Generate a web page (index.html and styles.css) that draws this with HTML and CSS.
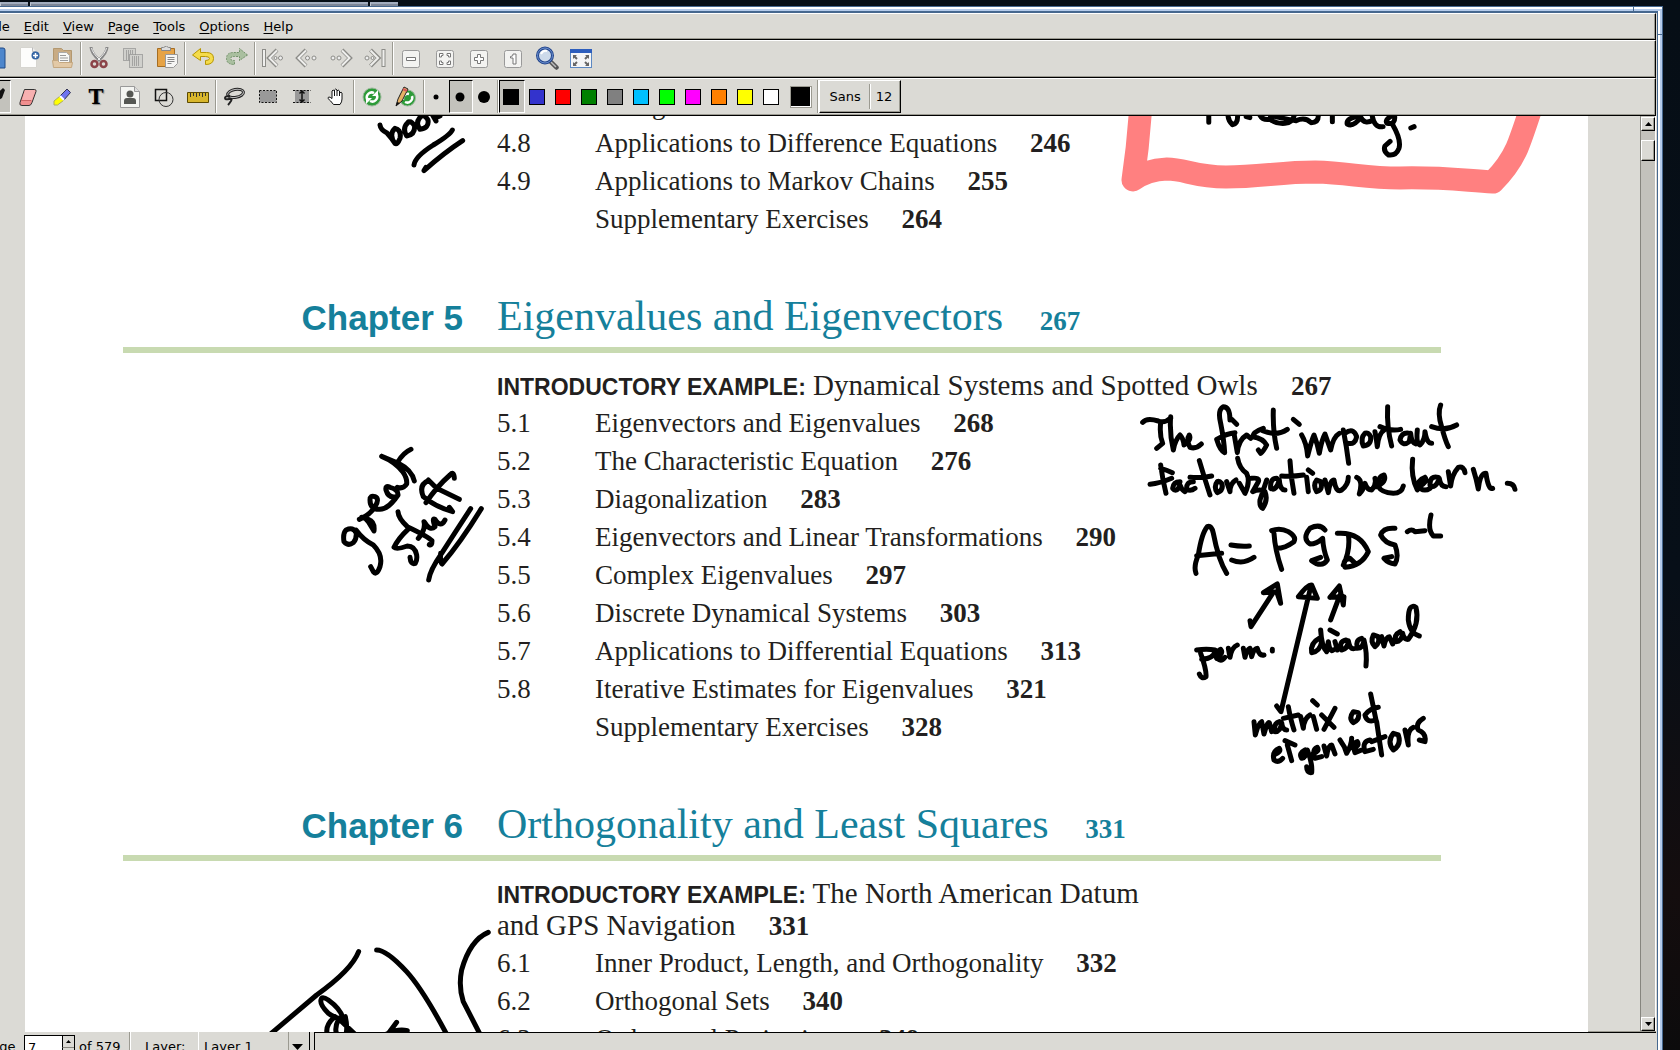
FILE: index.html
```html
<!DOCTYPE html>
<html lang="en">
<head>
    <meta charset="UTF-8">
    <meta name="viewport" content="width=device-width, initial-scale=1.0">
    <title>Xournal</title>
    <link rel="stylesheet" href="styles.css">
</head>
<body>
    <div class="taskbar"><span class="task"></span><span class="task wide"></span><span class="task"></span></div>

    <div class="window">
        <div class="frame">
        <nav class="menubar">
            <button type="button"><u>F</u>ile</button>
            <button type="button"><u>E</u>dit</button>
            <button type="button"><u>V</u>iew</button>
            <button type="button"><u>P</u>age</button>
            <button type="button"><u>T</u>ools</button>
            <button type="button"><u>O</u>ptions</button>
            <button type="button"><u>H</u>elp</button>
        </nav>

        <div class="toolbar main">
            <button type="button" aria-label="Save"><svg viewBox="0 0 24 24"><path d="M1 2h19q2 0 2 2v18H1z" fill="#4d86cc" stroke="#204a87"/><path d="M5 5h12v7H5z" fill="#eee"/></svg></button>
            <button type="button" aria-label="New"><svg viewBox="0 0 24 24"><path d="M3.500 1.500h12l4 4v16h-16z" fill="#fdfdfc" stroke="#d6d5d0"/><path d="M15.500 1.500v4h4" fill="#eee" stroke="#bbb"/><circle cx="18.500" cy="9.500" r="4" fill="#3465a4"/><path d="M18.500 7v5M16 9.500h5" stroke="#fff" stroke-width="1.500"/></svg></button>
            <button type="button" aria-label="Open"><svg viewBox="0 0 24 24"><path d="M2.500 2.500h8l2 2h8v15h-18z" fill="#c8ab84" stroke="#b39870"/><path d="M7.500 6.500h8l3 3v9h-11z" fill="#f8f8f6" stroke="#aaa"/><path d="M9 9.500h6M9 12h8M9 14.500h8" stroke="#999"/><path d="M1.500 14.500h5l2 2h13l-1 5h-18z" fill="#e3c9a6" stroke="#c4a780"/></svg></button>
            <span class="sep"></span>
            <button type="button" aria-label="Cut"><svg viewBox="0 0 24 24"><path d="M4 1q0 6 9 14M20 1q0 6-9 14" fill="none" stroke="#888" stroke-width="3"/><path d="M4.500 2q1 5 8.500 12M19.500 2q-1 5-8.500 12" fill="none" stroke="#eee"/><circle cx="7.500" cy="18" r="3" fill="none" stroke="#8b4348" stroke-width="2.500"/><circle cx="16.500" cy="18" r="3" fill="none" stroke="#8b4348" stroke-width="2.500"/></svg></button>
            <button type="button" aria-label="Copy"><svg viewBox="0 0 24 24"><g fill="#d0d0cc" stroke="#777" stroke-dasharray="1 1"><path d="M2.500 2.500h12v12h-12z"/><path d="M8.500 8.500h13v13h-13z"/></g><path d="M5 5h7M5 7h7M5 9h3M5 11h3M5 13h3M11 11h8M11 13h8M11 15h8M11 17h8M11 19h8" stroke="#777" stroke-dasharray="1 1"/></svg></button>
            <button type="button" aria-label="Paste"><svg viewBox="0 0 24 24"><path d="M2.500 2.500h17v18h-17z" fill="#e6a345" stroke="#a56d22"/><path d="M6.500 4.500v-3h2q3-3 5 0h2v3z" fill="#ddd" stroke="#888"/><path d="M10.500 8.500h12v9l-4 4h-8z" fill="#f6f6f4" stroke="#999"/><path d="M12.500 11.500h7M12.500 13.500h7M12.500 15.500h7M12.500 17.500h4" stroke="#888"/></svg></button>
            <span class="sep"></span>
            <button type="button" aria-label="Undo"><svg viewBox="0 0 24 24"><path d="M1.500 9l8-6.500v4h6q7 0 7 6t-8 6v-4q4 0 4-2t-4-2h-5v4z" fill="#f5dc4b" stroke="#b79600"/></svg></button>
            <button type="button" aria-label="Redo"><svg viewBox="0 0 24 24"><path d="M22.500 9l-8-6.500v4h-6q-7 0-7 6t8 6v-4q-4 0-4-2t4-2h5v4z" fill="#a9bf9f" stroke="#72916a" stroke-dasharray="2 1"/></svg></button>
            <span class="sep"></span>
            <button type="button" aria-label="First page"><svg viewBox="0 0 24 24"><path d="M3 3v18M16 4l-8 8 8 8" fill="none" stroke="#8c8c88" stroke-width="4"/><path d="M3 4v16M16 4.500l-7.500 7.500 7.500 7.500" fill="none" stroke="#efefed" stroke-width="2"/><circle cx="14.500" cy="12" r="1.500" fill="#eee" stroke="#8c8c88"/><circle cx="19.500" cy="12" r="2" fill="#eee" stroke="#8c8c88"/></svg></button>
            <button type="button" aria-label="Previous page"><svg viewBox="0 0 24 24"><path d="M11 4l-8 8 8 8" fill="none" stroke="#8c8c88" stroke-width="4"/><path d="M11 4.500L3.500 12l7.500 7.500" fill="none" stroke="#efefed" stroke-width="2"/><circle cx="12.500" cy="12" r="2" fill="#eee" stroke="#8c8c88"/><circle cx="19" cy="12" r="2" fill="#eee" stroke="#8c8c88"/></svg></button>
            <button type="button" aria-label="Next page"><svg viewBox="0 0 24 24"><path d="M13 4l8 8-8 8" fill="none" stroke="#8c8c88" stroke-width="4"/><path d="M13 4.500l7.500 7.500-7.500 7.500" fill="none" stroke="#efefed" stroke-width="2"/><circle cx="4" cy="12" r="2" fill="#eee" stroke="#8c8c88"/><circle cx="10" cy="12" r="2" fill="#eee" stroke="#8c8c88"/></svg></button>
            <button type="button" aria-label="Last page"><svg viewBox="0 0 24 24"><path d="M20.500 3v18M7.500 4l8 8-8 8" fill="none" stroke="#8c8c88" stroke-width="4"/><path d="M20.500 4v16M7.500 4.500l7.500 7.500-7.500 7.500" fill="none" stroke="#efefed" stroke-width="2"/><circle cx="4" cy="12" r="2" fill="#eee" stroke="#8c8c88"/><circle cx="9.500" cy="12" r="1.500" fill="#eee" stroke="#8c8c88"/></svg></button>
            <span class="sep"></span>
            <button type="button" aria-label="Zoom out"><svg viewBox="0 0 24 24"><rect x="3.500" y="4.500" width="17" height="17" rx="2" fill="#f3f3f1" stroke="#999"/><path d="M7.500 11.500h9v3h-9z" fill="#fff" stroke="#777"/></svg></button>
            <button type="button" aria-label="Page width"><svg viewBox="0 0 24 24"><rect x="3.500" y="4.500" width="17" height="17" rx="2" fill="#f3f3f1" stroke="#999"/><path d="M6.500 11V7.500H10v2H8.500V11zM14 7.500h3.500V11h-2V9.500H14zM6.500 15v3.500H10v-2H8.500V15zM17.500 15v3.500H14v-2h1.500V15z" fill="#fff" stroke="#777"/></svg></button>
            <button type="button" aria-label="Zoom in"><svg viewBox="0 0 24 24"><rect x="3.500" y="4.500" width="17" height="17" rx="2" fill="#f3f3f1" stroke="#999"/><path d="M10.500 8.500h3v3h3v3h-3v3h-3v-3h-3v-3h3z" fill="#fff" stroke="#777"/></svg></button>
            <button type="button" aria-label="Normal size"><svg viewBox="0 0 24 24"><rect x="3.500" y="4.500" width="17" height="17" rx="2" fill="#f3f3f1" stroke="#999"/><path d="M9.500 10.500q3 0 2.500-2.500h3v10h-3v-6h-2.500z" fill="#fff" stroke="#777"/></svg></button>
            <button type="button" aria-label="Set zoom"><svg viewBox="0 0 24 24"><path d="M14 14l7.500 7.500" stroke="#555" stroke-width="4.500" stroke-linecap="round"/><path d="M16 16l5 5" stroke="#bbb" stroke-width="1.500"/><circle cx="10" cy="9.500" r="7.500" fill="#cddaea" stroke="#24468c" stroke-width="3"/><circle cx="10" cy="9.500" r="7.500" fill="none" stroke="#6d92d2"/><path d="M6 8q2-4 6-3" fill="none" stroke="#fff" stroke-width="2"/></svg></button>
            <button type="button" aria-label="Full screen"><svg viewBox="0 0 24 24"><rect x="1.500" y="3.500" width="21" height="18" fill="#f5f6f7" stroke="#5c88c2"/><path d="M1 3h22v4H1z" fill="#2d5ebd"/><path d="M4 9h4L6.700 10.300l2 2-1.400 1.400-2-2L4 13zM20 9v4l-1.300-1.300-2 2-1.400-1.400 2-2L16 9zM4 20v-4l1.300 1.300 2-2 1.400 1.400-2 2L8 20zM20 20h-4l1.300-1.300-2-2 1.400-1.400 2 2L20 16z" fill="#666"/></svg></button>
        </div>

        <div class="toolbar tools">
            <button type="button" class="on" aria-label="Pen"><svg viewBox="0 0 24 24"><path d="M21 3l2 2-3 8L8 21l2-8z" fill="#111"/></svg></button>
            <button type="button" aria-label="Eraser"><svg viewBox="0 0 24 24"><path d="M8.500 4.500h10q2 0 1.500 2l-4 11q-1 3-3 3h-7q-3 0-2-3z" fill="#f08f8f" stroke="#333"/><path d="M9 5h9q2 0 1 2l-3 8H6z" fill="#f7b1b1"/><path d="M5 15.500h10" stroke="#c66"/></svg></button>
            <button type="button" aria-label="Highlighter"><svg viewBox="0 0 24 24"><path d="M17 4l3.500 3.500-7 8-4-4z" fill="#6f74ee" stroke="#335"/><path d="M9.500 11.500l4 4-6 4.500H4v-4z" fill="#ff0" stroke="#aa6"/><path d="M10 11l4 4" stroke="#fff" stroke-width="2"/></svg></button>
            <button type="button" class="letter" aria-label="Text">T</button>
            <button type="button" aria-label="Image"><svg viewBox="0 0 24 24"><path d="M2.500 1.500h14l5 5v16h-19z" fill="#f4f5f2" stroke="#999"/><path d="M16.500 1.500v5h5" fill="#ddd" stroke="#999"/><circle cx="12" cy="9" r="3.500" fill="#555753"/><path d="M6 19v-3q0-3 3-3h6q3 0 3 3v3z" fill="#555753"/></svg></button>
            <button type="button" aria-label="Shape recognizer"><svg viewBox="0 0 24 24"><path d="M3.500 4.500h11v11h-11z" fill="none" stroke="#111" stroke-width="1.500"/><circle cx="14" cy="14.500" r="7" fill="none" stroke="#333"/></svg></button>
            <button type="button" aria-label="Ruler"><svg viewBox="0 0 24 24"><path d="M1.500 7.500h21v10h-21z" fill="#d8b62c" stroke="#5c4a00"/><path d="M4.500 8v4M7.500 8v3M10.500 8v4M13.500 8v3M16.500 8v4M19.500 8v3" stroke="#333"/></svg></button>
            <span class="sep"></span>
            <button type="button" aria-label="Select region"><svg viewBox="0 0 24 24"><ellipse cx="13.500" cy="8.500" rx="8" ry="4" transform="rotate(-10 13 8)" fill="none" stroke="#222" stroke-width="3"/><ellipse cx="13.500" cy="8.500" rx="8" ry="4" transform="rotate(-10 13 8)" fill="none" stroke="#bbb"/><path d="M8 11q-5 0-5 2t4 1 2 2-3 4" fill="none" stroke="#222" stroke-width="2"/></svg></button>
            <button type="button" aria-label="Select rectangle"><svg viewBox="0 0 24 24"><path d="M3.500 5.500h17v12h-17z" fill="#999" stroke="#111" stroke-dasharray="2 1.500"/></svg></button>
            <button type="button" aria-label="Vertical space"><svg viewBox="0 0 24 24"><path d="M5 5h14v13H5z" fill="#999"/><path d="M3 5.500h18M3 17.500h18" stroke="#111" stroke-dasharray="2 1.500"/><path d="M12 6v11M9.500 8.500L12 6l2.500 2.500M9.500 14.500L12 17l2.500-2.500" fill="none" stroke="#111" stroke-width="1.500"/></svg></button>
            <button type="button" aria-label="Hand tool"><svg viewBox="0 0 24 24"><path d="M9.500 19.500q-3-4-5.500-6 0-3 4 0V6q1-2 2.500 0V5q1-2 2.500 0v1q1-2 2.500 0v2q2-1.500 2.500 0v6q0 3-2 5.500z" fill="#fff" stroke="#111"/><path d="M10.500 6v5M13 6v5M15.500 7v4" stroke="#111"/></svg></button>
            <span class="sep"></span>
            <button type="button" aria-label="Default"><svg viewBox="0 0 24 24"><circle cx="12" cy="12" r="9" fill="#2d9b38" stroke="#9bb89b"/><path d="M7 14a5 5 0 0 1 7-6M17 10a5 5 0 0 1-7 6" fill="none" stroke="#fff" stroke-width="2.500"/><path d="M12 11h6V5zM12 13H6v6z" fill="#fff"/></svg></button>
            <button type="button" aria-label="Default pen"><svg viewBox="0 0 24 24"><circle cx="13.500" cy="13" r="8" fill="#2d9b38" stroke="#9bb89b"/><path d="M9 15a5 5 0 0 1 6-6M18 11a5 5 0 0 1-7 6" fill="none" stroke="#fff" stroke-width="2.500"/><path d="M2 21l2-7 6-12 4 2-6 12z" fill="#e7b266" stroke="#222"/><path d="M9.500 3l4 2-1 2-4-2z" fill="#d35a5a"/><path d="M2 21l1-4 3 1z" fill="#111"/></svg></button>
            <span class="sep"></span>
            <button type="button" class="dot" aria-label="Fine"><svg viewBox="0 0 24 24"><circle cx="12" cy="12" r="2.500"/></svg></button>
            <button type="button" class="dot on" aria-label="Medium"><svg viewBox="0 0 24 24"><circle cx="12" cy="12" r="4.500"/></svg></button>
            <button type="button" class="dot" aria-label="Thick"><svg viewBox="0 0 24 24"><circle cx="12" cy="12" r="6"/></svg></button>
            <span class="sep"></span>
            <button type="button" class="color on" aria-label="Black"><i class="black"></i></button>
            <button type="button" class="color" aria-label="Blue"><i class="blue"></i></button>
            <button type="button" class="color" aria-label="Red"><i class="red"></i></button>
            <button type="button" class="color" aria-label="Green"><i class="green"></i></button>
            <button type="button" class="color" aria-label="Gray"><i class="gray"></i></button>
            <button type="button" class="color" aria-label="Light blue"><i class="sky"></i></button>
            <button type="button" class="color" aria-label="Light green"><i class="lime"></i></button>
            <button type="button" class="color" aria-label="Magenta"><i class="magenta"></i></button>
            <button type="button" class="color" aria-label="Orange"><i class="orange"></i></button>
            <button type="button" class="color" aria-label="Yellow"><i class="yellow"></i></button>
            <button type="button" class="color" aria-label="White"><i class="white"></i></button>
            <button type="button" class="color custom" aria-label="Choose color"><i class="black"></i></button>
            <span class="sep"></span>
            <button type="button" class="font"><span>Sans</span><span>12</span></button>
        </div>

        <div class="canvas">
            <div class="viewport">
                <main class="page">
                    <ol class="toc">
                        <li><span>4.7</span>Change of Basis <b>241</b></li>
                        <li><span>4.8</span>Applications to Difference Equations <b>246</b></li>
                        <li><span>4.9</span>Applications to Markov Chains <b>255</b></li>
                        <li><span></span>Supplementary Exercises <b>264</b></li>
                    </ol>

                    <h2><span>Chapter 5</span>Eigenvalues and Eigenvectors <b>267</b></h2>
                    <p class="intro"><strong>INTRODUCTORY EXAMPLE:</strong> Dynamical Systems and Spotted Owls <b>267</b></p>
                    <ol class="toc">
                        <li><span>5.1</span>Eigenvectors and Eigenvalues <b>268</b></li>
                        <li><span>5.2</span>The Characteristic Equation <b>276</b></li>
                        <li><span>5.3</span>Diagonalization <b>283</b></li>
                        <li><span>5.4</span>Eigenvectors and Linear Transformations <b>290</b></li>
                        <li><span>5.5</span>Complex Eigenvalues <b>297</b></li>
                        <li><span>5.6</span>Discrete Dynamical Systems <b>303</b></li>
                        <li><span>5.7</span>Applications to Differential Equations <b>313</b></li>
                        <li><span>5.8</span>Iterative Estimates for Eigenvalues <b>321</b></li>
                        <li><span></span>Supplementary Exercises <b>328</b></li>
                    </ol>

                    <h2><span>Chapter 6</span>Orthogonality and Least Squares <b>331</b></h2>
                    <p class="intro"><strong>INTRODUCTORY EXAMPLE:</strong> The North American Datum<br>and GPS Navigation <b>331</b></p>
                    <ol class="toc">
                        <li><span>6.1</span>Inner Product, Length, and Orthogonality <b>332</b></li>
                        <li><span>6.2</span>Orthogonal Sets <b>340</b></li>
                        <li><span>6.3</span>Orthogonal Projections <b>349</b></li>
                    </ol>
                </main>

                <!-- pen strokes on top of the page -->
                <svg class="ink" viewBox="0 116 1640 918" role="img" aria-label="Handwritten notes">
                    <path class="marker" d="M1141 100Q1139 140 1133 180Q1146 170 1167 169C1185 169 1195 177 1226 177C1260 177 1280 172 1315 172C1350 173 1365 178 1400 178C1440 177 1460 180 1493 182Q1509 166 1517 148Q1522 136 1532 105"/>
                    <g transform="translate(1100 100) scale(.37 .3333)">
                        <path d="M294 46v21M346 42Q345 60 358 74Q372 72 372 48M395 50l10 3M432 45Q440 62 460 58Q475 72 500 70Q520 68 525 46M460 46Q490 55 530 62Q555 50 570 68Q590 68 590 48M628 45v20M700 48Q665 55 668 72Q685 82 705 52Q715 75 738 60M735 42Q740 85 765 80M790 46Q768 60 776 70Q800 75 796 46M790 72Q815 120 808 145Q800 168 780 165Q765 155 770 138l14-14M840 84l9-4"/>
                    </g>
                    <g transform="translate(320 110) scale(.3333)">
                        <path d="M180 45Q182 60 200 68Q215 85 225 100Q205 75 225 55Q245 60 240 85Q232 105 225 100M265 36Q245 55 260 78Q285 75 284 48Q275 32 265 36M300 22Q285 40 300 58Q328 54 324 30Q312 10 300 22M332 5l16 28M345 24l15-6M397 60Q390 75 340 105Q285 140 282 165M428 92Q370 130 312 182l6-10"/>
                    </g>
                    <g transform="translate(320 430) scale(.3333)">
                        <path d="M273 58Q250 68 232 98M185 79L235 100Q275 120 283 153M185 79Q225 95 248 125Q262 145 260 162Q250 178 232 172M228 200Q205 205 198 180Q195 165 210 172Q235 178 234 195Q205 238 180 238Q150 240 150 210Q150 195 165 200Q180 206 165 230Q150 255 118 268M125 262Q135 262 145 275L162 303Q165 275 145 268M108 308Q100 290 78 300Q68 310 72 335Q85 350 100 338Q112 325 108 300Q130 330 160 345Q190 375 180 410Q170 438 160 425L152 410"/>
                        <path d="M264 298Q235 325 222 352Q230 360 262 348Q285 348 290 375Q292 390 286 400Q272 405 270 382M234 245Q235 265 262 290Q325 320 336 332Q336 348 328 344M295 325Q318 298 312 275Q330 305 345 290Q335 262 345 268Q362 295 375 270M325 150L350 175L418 208M403 145Q402 122 390 135Q350 170 318 218M325 152Q295 165 310 200Q345 230 398 245L388 232M452 236Q410 300 365 370Q330 420 326 450M484 236Q420 340 366 402Q360 395 362 370"/>
                    </g>
                    <g transform="translate(1130 390) scale(.3333)">
                        <path d="M38 97Q50 82 85 93Q105 100 122 84M92 98Q88 135 98 160L80 175M122 80Q118 130 130 180Q135 150 150 135Q160 145 162 165Q185 150 178 135Q168 150 180 172Q198 178 214 162M300 90Q300 50 280 50Q262 60 272 100Q282 150 284 188Q270 182 260 148Q290 130 315 128M305 88l15 15M312 130L322 188Q325 150 350 135l12 10M400 115Q370 125 368 140Q400 145 410 165Q400 185 392 190l-7-10M430 60Q428 120 440 175M398 122Q440 140 472 118"/>
                        <path d="M490 88l18 15M515 135Q530 160 533 198Q545 150 552 135Q562 160 568 190Q575 150 585 132Q595 160 602 180Q610 140 628 130M640 120Q650 170 656 220M645 130Q670 110 680 140Q675 165 655 160M705 130Q690 145 700 168Q725 165 722 140Q715 125 705 130M735 125Q740 150 742 170Q745 130 765 118M773 50Q770 110 785 168M750 110Q785 125 812 118M840 130Q815 125 810 150Q820 170 838 155L842 130Q845 160 858 162M862 120Q858 160 870 165Q885 150 885 125Q890 160 905 160M932 45Q922 70 935 110Q945 150 955 170M905 110Q945 125 980 105"/>
                        <path d="M92 225Q98 270 108 310M60 283Q90 280 125 265M92 235Q110 240 127 248M150 275Q130 275 128 295Q140 310 150 285Q155 300 165 305M190 275Q168 275 170 298Q182 305 195 295M208 212Q222 260 240 315M180 262Q215 265 245 258M262 275Q250 290 262 308Q282 300 275 280Q268 272 262 275M290 275L300 305Q300 280 318 270M323 205Q328 235 350 250Q362 275 345 310L328 280M365 265Q390 262 385 275L368 305Q390 295 405 305Q415 330 398 355Q388 350 390 330L410 270M440 265Q420 265 422 295Q438 305 448 270Q450 300 465 300M480 212Q482 260 492 310M455 258Q490 260 520 255M530 262l5 43M535 240l13 10M560 270Q548 285 560 305Q580 300 572 275ZM585 270L595 308Q600 270 612 270Q618 310 635 300Q655 285 655 262M680 262Q700 270 688 312Q700 300 705 280Q712 300 725 300Q740 285 735 265M740 290Q772 275 762 255Q742 260 745 290Q755 308 790 310Q815 310 820 288"/>
                        <path d="M848 208Q842 260 862 300Q860 270 885 262M868 290Q895 275 885 262Q865 270 872 296Q885 305 900 295M925 262Q900 255 900 285Q915 300 928 265Q932 290 948 290M955 245L962 288Q965 255 985 232Q1002 228 1005 248M1030 238Q1040 270 1045 297Q1050 250 1068 250Q1075 300 1088 295M1132 280Q1152 280 1155 298"/>
                        <path d="M198 550Q190 530 205 495Q215 430 232 410Q245 405 250 430Q265 510 290 550M200 497L275 490M303 465Q330 470 358 468M305 510Q340 525 372 502M432 430Q435 480 455 538M425 422Q450 412 475 425Q500 440 492 455Q465 475 440 475M585 420Q570 400 540 415Q515 445 540 462Q560 462 578 445Q580 480 592 510Q575 535 545 512L572 502M655 432Q662 480 640 525M622 430Q690 425 715 485Q695 528 645 532Q635 510 660 505L678 522M795 415Q760 412 752 435Q765 460 795 465Q808 500 795 522Q775 520 762 505L785 500M832 425Q845 415 855 425L885 422M903 375Q892 420 910 438L932 438"/>
                    </g>
                    <g transform="translate(1180 570) scale(.3333)">
                        <path d="M210 152L213 170L278 70M250 68L292 42L302 100L290 65L250 68ZM355 80Q385 40 395 45L412 85L355 80ZM390 60L303 425L290 408M452 150L480 75M450 82L478 48L490 105L492 80L450 82"/>
                        <path d="M50 240Q80 235 105 240Q105 265 65 268M62 250Q80 300 78 320Q65 330 58 312M110 265Q132 250 122 238Q105 245 115 268Q125 275 135 262M145 235L150 262Q155 232 172 225M190 235L195 262Q200 240 210 235L215 260Q222 235 232 235Q238 258 252 255M277 238v5"/>
                        <path d="M418 205Q390 220 395 248Q420 245 425 215M422 180Q425 230 440 245L445 215Q450 250 460 240M450 180l22 12M465 215L472 240M498 210Q475 215 485 240Q505 235 505 212Q510 238 522 236M545 205Q525 210 532 235Q550 235 552 210Q562 250 558 288M580 195Q570 215 585 230Q600 220 595 200ZM605 200L612 228Q618 200 628 200L638 222M660 185Q640 195 648 215Q665 215 668 190Q672 210 685 208Q720 160 708 112Q685 98 685 150Q690 190 718 198"/>
                        <path d="M222 455L226 495Q235 460 245 455L252 492Q262 455 268 458L275 485M298 455Q280 460 285 485Q302 485 305 458Q308 480 320 480M325 410Q332 450 342 480M310 445L355 435M362 440L370 475Q372 445 390 435M400 440L410 478M398 392l14 13M425 435L462 472M465 415L432 478M520 425Q505 445 520 458Q540 450 535 428ZM572 372Q580 410 588 450Q560 460 555 435Q570 415 595 412"/>
                        <path d="M282 555Q305 545 298 535Q275 545 282 570Q295 580 308 565M322 525L335 572M315 512l30 13M375 540Q355 550 365 565Q380 562 382 540Q398 580 395 608Q380 610 380 590M400 550Q420 545 412 532Q395 540 405 565L425 560M432 528L440 558Q445 525 455 525L465 552M480 510Q495 530 500 550Q515 525 515 505M520 535Q540 528 532 515Q515 520 525 548L545 540M570 510Q545 515 555 545L580 538M590 455Q598 510 605 555M575 515L615 500M640 490Q620 515 640 540Q665 525 655 495ZM675 480L685 525Q680 480 700 472M730 445Q705 460 715 480Q740 490 735 515L718 510"/>
                    </g>
                    <g transform="translate(0 920) scale(.3333)">
                        <path d="M1076 95Q1055 150 950 225L800 352M1130 90Q1160 90 1220 155Q1270 210 1345 352M1465 37Q1410 60 1385 150Q1375 200 1390 245L1445 352M965 235Q955 250 985 280Q1010 298 1030 295Q1020 265 985 240Q970 230 965 235M1005 290Q970 320 985 350M1015 300Q1000 330 1015 350M1036 290Q1045 330 1035 350M1020 300L1075 352M1190 307L1158 350M1160 342Q1195 325 1222 332L1218 350"/>
                    </g>
                </svg>
            </div>

            <div class="scrollbar">
                <button type="button" aria-label="Scroll up"><svg viewBox="0 0 7 4"><path d="M0 4h7L3.500 0z"/></svg></button>
                <span class="thumb"></span>
                <button type="button" aria-label="Scroll down"><svg viewBox="0 0 7 4"><path d="M0 0h7L3.500 4z"/></svg></button>
            </div>
        </div>

        <div class="statusbar">
            <label for="pageno">Page</label>
            <span class="spin">
                <input type="text" id="pageno" value="7">
                <span class="arrows">
                    <button type="button" aria-label="Next"><svg viewBox="0 0 5 3"><path d="M0 3h5L2.500 0z"/></svg></button>
                    <button type="button" aria-label="Previous"><svg viewBox="0 0 5 3"><path d="M0 0h5L2.500 3z"/></svg></button>
                </span>
            </span>
            <span class="total">of 579</span>
            <span class="sep"></span>
            <label for="layer" class="layer">Layer:</label>
            <span class="combo">
                <select id="layer"><option>Layer 1</option><option>Background</option></select>
                <svg viewBox="0 0 11 6"><path d="M0 0h11L5.500 6z"/></svg>
            </span>
            <span class="message"></span>
        </div>
        </div>
    </div>
</body>
</html>
```
FILE: styles.css
```css
* {
    box-sizing: border-box;
}

body {
    margin: 0;
    height: 100vh;
    overflow: hidden;
    background: linear-gradient(#060e16 0%, #070f18 55%, #140d0e 85%, #0c0b0c 100%);
    font-family: "DejaVu Sans", sans-serif;
    font-size: 13px;
    color: #000;
}

button {
    font: inherit;
    color: inherit;
    background: none;
    border: none;
    padding: 0;
    margin: 0;
}

.taskbar {
    display: flex;
    height: 6px;
    padding-top: 2px;
    gap: 2px;
}

.task {
    width: 28px;
    background: #7d8798;
    border-top: 2px solid #a2adbf;
    border-left: 1px solid #c3cad6;
}

.task.wide {
    width: 338px;
}

/* window manager frame */
.window {
    position: relative;
    height: calc(100vh + 10px);
    margin-right: 17px;
    padding: 3px 1px 0 0;
    background: #46688f;
}

.window::before,
.window::after {
    content: "";
    position: absolute;
    background: #46688f;
}

.window::before {
    right: 29px;
    top: 1px;
    width: 1px;
    height: 4px;
}

.window::after {
    right: 1px;
    top: 28px;
    width: 4px;
    height: 1px;
}

.frame {
    height: 100%;
    display: flex;
    flex-direction: column;
    border-top: 2px solid #b4cbeb;
    border-right: 2px solid #b4cbeb;
    box-shadow: 0 -2px #fff, inset -2px 0 #fff, inset -3px 0 #46688f, inset 0 2px #46688f;
    padding: 2px 4px 0 0;
    background: #dbdad5;
}

.menubar {
    display: flex;
    height: 27px;
    padding-bottom: 1px;
    margin-left: -19px;
    border-top: 1px solid #fff;
    border-right: 1px solid #000;
    border-bottom: 1px solid #000;
    box-shadow: inset -1px -1px #9b9a91;
}

.menubar button {
    padding: 0 7px;
}

.menubar u {
    text-underline-offset: 2px;
}

.toolbar {
    display: flex;
    flex: none;
    height: 38px;
    padding: 1px 0 2px;
    border-top: 1px solid #fff;
    border-right: 1px solid #000;
    border-bottom: 1px solid #000;
    box-shadow: inset -1px -1px #9b9a91;
}

.toolbar.main {
    margin-left: -22px;
}

.toolbar.main svg {
    margin-bottom: 2px;
}

.toolbar.tools {
    margin-left: -23px;
}

.toolbar button {
    width: 34px;
    display: flex;
    flex: none;
    align-items: center;
    justify-content: center;
}

.toolbar svg {
    width: 24px;
    height: 24px;
    flex: none;
    fill: #000;
}

.toolbar .on {
    background: #c3c2bc;
    border: 1px solid #fff;
    border-top-color: #000;
    border-left-color: #000;
}

.sep {
    width: 2px;
    flex: none;
    background: #9b9a91;
    border-right: 1px solid #fff;
}

.toolbar .letter {
    font-family: "DejaVu Serif", serif;
    font-weight: bold;
    font-size: 20px;
    text-shadow: 1px 1px 1px #888;
}

.toolbar .dot {
    width: 24px;
}

.dot svg {
    margin-right: 2px;
}

.toolbar .color {
    width: 26px;
    padding-right: 2px;
}

.color i {
    width: 16px;
    height: 16px;
    border: 1px solid #000;
}

.toolbar .custom {
    width: 32px;
    padding: 0;
}

.custom i {
    width: 20px;
    height: 20px;
    outline: 1px solid #9b9a91;
    border: 0;
    box-shadow: -1px -1px #fff, inset -1px -1px #fff;
}

.black { background: #000; }
.blue { background: #3333cc; }
.red { background: #ff0000; }
.green { background: #008000; }
.gray { background: #808080; }
.sky { background: #00c0ff; }
.lime { background: #00ff00; }
.magenta { background: #ff00ff; }
.orange { background: #ff8000; }
.yellow { background: #ffff00; }
.white { background: #fff; }

.toolbar .font {
    width: 82px;
    border: 1px solid #fff;
    border-right-color: #000;
    border-bottom-color: #000;
    box-shadow: inset -1px -1px #9b9a91;
}

.font span {
    padding: 5px 8px;
}

.font span + span {
    padding: 5px 6px;
    border-left: 1px solid #9b9a91;
    box-shadow: inset 1px 0 #fff;
}

.canvas {
    flex: 1;
    min-height: 0;
    display: flex;
    background: #dbdad5;
    border-right: 1px solid #fff;
}

.viewport {
    position: relative;
    flex: 1;
    overflow: hidden;
    padding: 0 52px 0 25px;
}

.page {
    background: #fff;
    margin-top: -30px;
    padding: 0 147px 0 98px;
    font-family: "Liberation Serif", serif;
    font-size: 27px;
    line-height: 38px;
    color: #231f20;
    white-space: nowrap;
}

.page b {
    margin-left: 26px;
    font-size: 27px;
    line-height: 1;
}

.toc {
    list-style: none;
    margin: 0;
    padding: 0 0 0 374px;
}

.toc span {
    display: inline-block;
    width: 98px;
}

.page h2 {
    margin: 54px 0 13px;
    padding-bottom: 7px;
    border-bottom: 6px solid #c8dab1;
    font-size: 42px;
    font-weight: normal;
    line-height: 48px;
    color: #15809b;
}

.page h2 span {
    display: inline-block;
    width: 340px;
    margin-right: 34px;
    text-align: right;
    font-family: "Liberation Sans", sans-serif;
    font-weight: bold;
    font-size: 35px;
    line-height: 1;
}

.intro {
    margin: 0;
    padding: 3px 0 3px 374px;
    font-size: 29px;
    line-height: 32px;
}

.intro strong {
    font-family: "Liberation Sans", sans-serif;
    font-size: 23px;
    line-height: 1;
}

.ink {
    position: absolute;
    left: 0;
    top: 0;
    width: 1640px;
    height: 918px;
    fill: none;
    stroke: #000;
    stroke-width: 5px;
    stroke-linecap: round;
    stroke-linejoin: round;
}

.ink path {
    vector-effect: non-scaling-stroke;
}

.ink .marker {
    stroke: #ff8080;
    stroke-width: 23px;
}

.scrollbar {
    width: 15px;
    display: flex;
    flex-direction: column;
    justify-content: space-between;
    background: #c3c2bc;
    border-left: 1px solid #86857e;
    padding: 1px 0;
}

.scrollbar button,
.thumb {
    display: flex;
    align-items: center;
    justify-content: center;
    height: 14px;
    background: #dbdad5;
    border: 1px solid #fff;
    border-right-color: #000;
    border-bottom-color: #000;
    box-shadow: inset -1px -1px #9b9a91;
}

.scrollbar svg {
    width: 7px;
    height: 4px;
}

.thumb {
    height: 21px;
    margin: 9px 0 auto;
}

.statusbar {
    display: flex;
    flex: none;
    height: 34px;
    margin-left: -16px;
    line-height: 26px;
}

.statusbar label {
    width: 40px;
    padding-top: 2px;
}

.spin {
    display: flex;
    width: 51px;
    height: 28px;
    margin-top: 3px;
    border: 1px solid #000;
    background: #fff;
}

.spin input {
    width: 37px;
    padding: 0 3px;
    border: none;
    font: inherit;
    line-height: 20px;
    height: 22px;
    background: none;
}

.arrows {
    width: 12px;
    display: flex;
    flex-direction: column;
    background: #dbdad5;
}

.arrows button {
    height: 12px;
    display: flex;
    align-items: center;
    justify-content: center;
    border-left: 1px solid #000;
    border-bottom: 1px solid #86857e;
}

.arrows svg {
    width: 5px;
    height: 3px;
}

.total {
    width: 54px;
    padding: 2px 0 0 4px;
}

.statusbar .layer {
    width: 67px;
    padding-left: 14px;
}

.combo {
    position: relative;
    width: 112px;
    border-left: 1px solid #fff;
    border-right: 1px solid #000;
}

.combo select {
    width: 90px;
    height: 28px;
    padding: 2px 5px 0;
    appearance: none;
    border: none;
    border-right: 1px solid #9b9a91;
    background: none;
    font: inherit;
}

.combo svg {
    position: absolute;
    right: 6px;
    top: 12px;
    width: 11px;
    height: 6px;
}

.message {
    flex: 1;
    margin-left: 4px;
    border: 1px solid #000;
    border-right: 0;
    box-shadow: 0 -1px #9b9a91;
}
```
